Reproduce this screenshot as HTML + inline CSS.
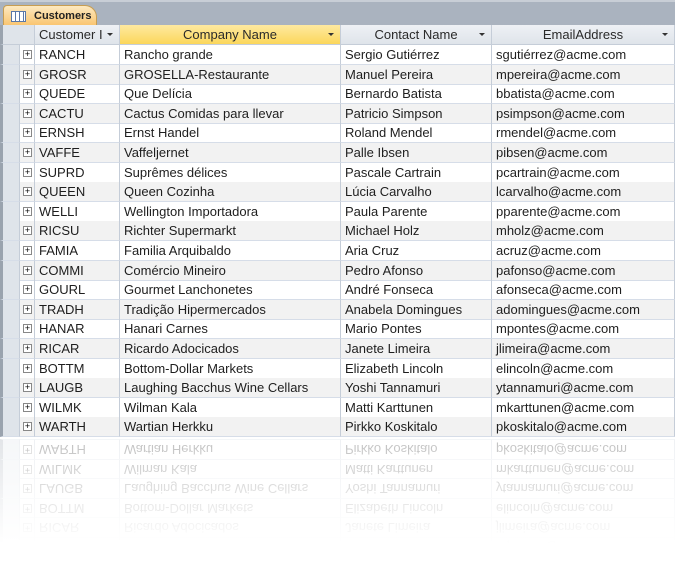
<!DOCTYPE html><html><head><style>
body{margin:0;width:675px;height:570px;background:#fff;overflow:hidden;position:relative;font-family:"Liberation Sans",sans-serif;font-size:13px;color:#1e1e1e}
.top{position:absolute;left:0;top:0;width:675px;height:25px;background:#aab3bf;border-top:2px solid #c8ced6;box-sizing:border-box}
.tab{position:absolute;left:3px;top:3px;width:94px;height:22px;background:linear-gradient(#fde9c0,#f9c26a);border:1px solid #c79d52;border-bottom:none;border-radius:4px 12px 0 0;box-sizing:border-box;font-weight:bold;font-size:11px;line-height:21px;padding-left:30px;color:#222}
.ico{position:absolute;left:7px;top:5px;width:15px;height:11px;border:1px solid #5a78a8;background:repeating-linear-gradient(90deg,#fff 0 3px,#5a78a8 3px 4px),#fff;box-sizing:border-box}
.grid{position:absolute;left:0;top:25px;width:675px}
.hdr{position:absolute;top:0;height:20px;background:linear-gradient(#eef1f5,#dfe4ea);border-right:1px solid #c5cdd8;border-bottom:1px solid #c5cdd8;box-sizing:border-box;text-align:center;line-height:19px;font-size:13px;color:#2a2a2a}
.hdr.sel{background:linear-gradient(#fee9a0,#fbd75b)}
.hdr i{position:absolute;right:6px;top:8px;border:3px solid transparent;border-top:3px solid #333;width:0;height:0;border-bottom:0}
.row{position:absolute;left:0;width:675px;height:20px}
.c{position:absolute;top:0;height:20px;line-height:19px;border-right:1px solid #c5cdd8;border-bottom:1px solid #d6dde8;box-sizing:border-box;padding-left:4px;white-space:nowrap;overflow:hidden}
.s{left:0;width:20px;background:#dfe4ea;border-left:3px solid #9aa3ae;border-right:1px solid #c5cdd8}
.e{left:20px;width:15px;padding:0}
.e b{position:absolute;left:3px;top:5px;width:9px;height:9px;border:1px solid #888;box-sizing:border-box;background:#fff;font-weight:normal;font-size:9px;line-height:7px;text-align:center;color:#000}
.alt .c:not(.s){background:#f2f2f2}
.refl{position:absolute;left:0;top:437px;width:675px;height:133px;overflow:hidden}
.refl .inner{position:absolute;left:0;top:0;width:675px;height:120px;transform:scaleY(-1);opacity:.35}
.fade{position:absolute;left:0;top:0;width:675px;height:133px;background:linear-gradient(rgba(255,255,255,0.2),#fff 80%)}
</style></head><body>
<div class="top"><div class="tab"><div class="ico"></div>Customers</div></div>
<div class="grid">
<div class="hdr" style="left:0;width:35px;background:#dfe4ea;border-left:3px solid #9aa3ae"></div>
<div class="hdr" style="left:35px;width:85px;text-align:left;padding-left:4px">Customer I<i></i></div>
<div class="hdr sel" style="left:120px;width:221px">Company Name<i></i></div>
<div class="hdr" style="left:341px;width:151px">Contact Name<i></i></div>
<div class="hdr" style="left:492px;width:183px">EmailAddress<i></i></div>
</div>
<div id="rows"></div>
<div class="refl"><div class="inner" id="rf"></div><div class="fade"></div></div>
<script>
var d=[["RANCH","Rancho grande","Sergio Gutiérrez","sgutiérrez@acme.com"],["GROSR","GROSELLA-Restaurante","Manuel Pereira","mpereira@acme.com"],["QUEDE","Que Delícia","Bernardo Batista","bbatista@acme.com"],["CACTU","Cactus Comidas para llevar","Patricio Simpson","psimpson@acme.com"],["ERNSH","Ernst Handel","Roland Mendel","rmendel@acme.com"],["VAFFE","Vaffeljernet","Palle Ibsen","pibsen@acme.com"],["SUPRD","Suprêmes délices","Pascale Cartrain","pcartrain@acme.com"],["QUEEN","Queen Cozinha","Lúcia Carvalho","lcarvalho@acme.com"],["WELLI","Wellington Importadora","Paula Parente","pparente@acme.com"],["RICSU","Richter Supermarkt","Michael Holz","mholz@acme.com"],["FAMIA","Familia Arquibaldo","Aria Cruz","acruz@acme.com"],["COMMI","Comércio Mineiro","Pedro Afonso","pafonso@acme.com"],["GOURL","Gourmet Lanchonetes","André Fonseca","afonseca@acme.com"],["TRADH","Tradição Hipermercados","Anabela Domingues","adomingues@acme.com"],["HANAR","Hanari Carnes","Mario Pontes","mpontes@acme.com"],["RICAR","Ricardo Adocicados","Janete Limeira","jlimeira@acme.com"],["BOTTM","Bottom-Dollar Markets","Elizabeth Lincoln","elincoln@acme.com"],["LAUGB","Laughing Bacchus Wine Cellars","Yoshi Tannamuri","ytannamuri@acme.com"],["WILMK","Wilman Kala","Matti Karttunen","mkarttunen@acme.com"],["WARTH","Wartian Herkku","Pirkko Koskitalo","pkoskitalo@acme.com"]];
function row(r,top,alt){return '<div class="row'+(alt?' alt':'')+'" style="top:'+top+'px"><div class="c s"></div><div class="c e"><b>+</b></div><div class="c" style="left:35px;width:85px">'+r[0]+'</div><div class="c" style="left:120px;width:221px">'+r[1]+'</div><div class="c" style="left:341px;width:151px">'+r[2]+'</div><div class="c" style="left:492px;width:183px">'+r[3]+'</div></div>';}
var h='';d.forEach(function(r,i){h+=row(r,(45+i*19.6).toFixed(1),i%2==1)});document.getElementById('rows').innerHTML=h;
var f='';d.slice(14).forEach(function(r,i){f+=row(r,(i*19.6).toFixed(1),false)});document.getElementById('rf').innerHTML=f;
</script>
</body></html>
